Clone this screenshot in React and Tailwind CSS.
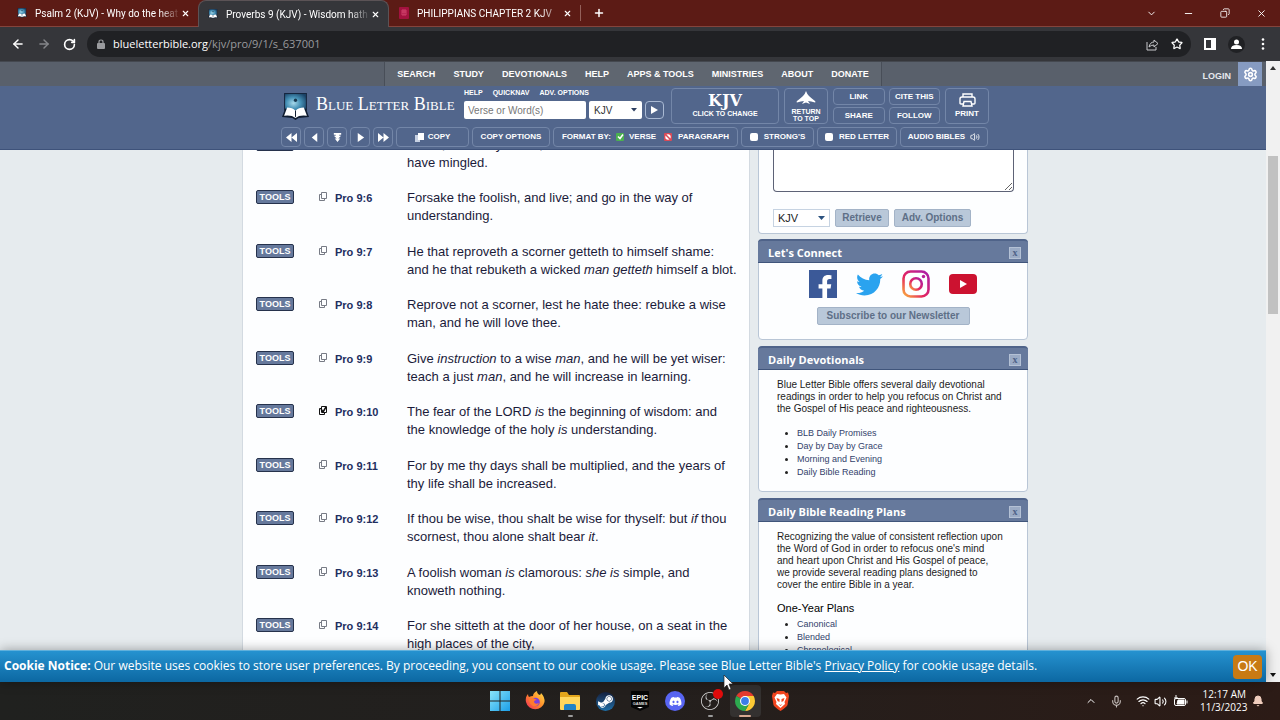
import React from "react";
import { FaTwitter, FaFacebookF, FaDiscord, FaSteamSymbol } from "react-icons/fa";
import { SiObsstudio } from "react-icons/si";
import {
  ArrowLeft,
  ArrowRight,
  RotateCw,
  Star,
  Settings,
  Volume2,
  Wifi,
  Mic,
  ChevronUp,
  ChevronDown,
  Minus,
  Copy,
  Plus,
  X,
  Bell,
} from "lucide-react";

const verses = [
  { id: "9:5", lines: [["Come, eat of my bread, and drink of the wine which I"], ["have mingled."]] },
  { id: "9:6", lines: [["Forsake the foolish, and live; and go in the way of"], ["understanding."]] },
  {
    id: "9:7",
    lines: [
      ["He that reproveth a scorner getteth to himself shame:"],
      ["and he that rebuketh a wicked ", <i key="i">man getteth</i>, " himself a blot."],
    ],
  },
  { id: "9:8", lines: [["Reprove not a scorner, lest he hate thee: rebuke a wise"], ["man, and he will love thee."]] },
  {
    id: "9:9",
    lines: [
      ["Give ", <i key="a">instruction</i>, " to a wise ", <i key="b">man</i>, ", and he will be yet wiser:"],
      ["teach a just ", <i key="i">man</i>, ", and he will increase in learning."],
    ],
  },
  {
    id: "9:10",
    checked: true,
    lines: [
      ["The fear of the LORD ", <i key="i">is</i>, " the beginning of wisdom: and"],
      ["the knowledge of the holy ", <i key="i">is</i>, " understanding."],
    ],
  },
  { id: "9:11", lines: [["For by me thy days shall be multiplied, and the years of"], ["thy life shall be increased."]] },
  {
    id: "9:12",
    lines: [
      ["If thou be wise, thou shalt be wise for thyself: but ", <i key="i">if</i>, " thou"],
      ["scornest, thou alone shalt bear ", <i key="i">it</i>, "."],
    ],
  },
  {
    id: "9:13",
    lines: [
      ["A foolish woman ", <i key="a">is</i>, " clamorous: ", <i key="b">she is</i>, " simple, and"],
      ["knoweth nothing."],
    ],
  },
  { id: "9:14", lines: [["For she sitteth at the door of her house, on a seat in the"], ["high places of the city,"]] },
];

const navItems = ["SEARCH", "STUDY", "DEVOTIONALS", "HELP", "APPS & TOOLS", "MINISTRIES", "ABOUT", "DONATE"];

const BlbIcon = ({ className }) => (
  <svg className={className} viewBox="0 0 26 26" aria-hidden="true">
    <defs>
      <radialGradient id="sky" cx=".4" cy=".55" r=".7">
        <stop offset="0" stopColor="#a5d8ea" />
        <stop offset=".5" stopColor="#4590b5" />
        <stop offset="1" stopColor="#1b4468" />
      </radialGradient>
    </defs>
    <rect x="2" y="0" width="22" height="17" fill="#15263f" />
    <rect x="3" y="1" width="20" height="16" fill="url(#sky)" />
    <circle cx="13" cy="7" r="1.6" fill="#17384f" />
    <path d="M0 23 3 15l10 2 10-2 3 8-10 1-3 2-3-2z" fill="#0f1c30" />
    <path d="M2 22 5 14q5 0 8 3 3-3 8-3l3 8q-7-1-11 2-4-3-11-2z" fill="#fff" />
    <path d="M13 17v6" stroke="#0f1c30" strokeWidth="1" />
  </svg>
);

const Tab = ({ active, title, icon, className }) => (
  <div
    className={`flex items-center h-full pr-2 ${
      active ? "bg-[#35363a] rounded-t-lg border-t border-x border-[#5b5356]" : "border-b border-[#84443c]"
    } ${className}`}
  >
    {icon}
    <span className="flex-1 ml-2 whitespace-nowrap text-[10px] text-white [mask-image:linear-gradient(to_right,black_85%,transparent)]">
      {title}
    </span>
    <button aria-label="Close tab" className="text-white">
      <X size={9} strokeWidth={3} />
    </button>
  </div>
);

const HeaderButton = ({ className, children }) => (
  <button
    className={`flex items-center justify-center rounded-sm border border-[#7386a8] font-bold text-white text-[8px] whitespace-nowrap ${className}`}
  >
    {children}
  </button>
);

const Panel = ({ title, className, children }) => (
  <section className={`rounded-sm border border-[#b9c6d6] bg-[#fdfeff] ${className}`}>
    <header className="-mx-px -mt-px h-6 rounded-t-sm border-t-2 border-b border-t-[#4f6389] border-b-[#40557b] bg-[#66799c] flex items-center justify-between pl-[10px] pr-[7px] pt-[2px]">
      <h2 className="font-['Open_Sans',sans-serif] font-bold text-[11px] leading-4 text-white">{title}</h2>
      <button
        aria-label={`Close ${title}`}
        className="size-3 flex items-center justify-center bg-[#9babc5] border border-[#b4c1d5] font-['Liberation_Serif',serif] font-bold text-[10px] leading-none text-[#4f6389]"
      >
        x
      </button>
    </header>
    {children}
  </section>
);

const LinkList = ({ items, className }) => (
  <ul className={`list-disc pl-5 text-[9px] leading-[13px] marker:text-[#222] ${className}`}>
    {items.map((item) => (
      <li key={item}>
        <a href="#" className="text-[#33426b]">
          {item}
        </a>
      </li>
    ))}
  </ul>
);

const BrowserChrome = () => (
  <div className="shrink-0">
    <div className="flex h-[27px] bg-[#5c1b15] font-['Roboto',sans-serif]">
      <Tab className="w-[198px] pl-[17px]" title="Psalm 2 (KJV) - Why do the heat" icon={<BlbIcon className="size-[10px] shrink-0" />} />
      <Tab active className="w-[191px] pl-[9px]" title="Proverbs 9 (KJV) - Wisdom hath" icon={<BlbIcon className="size-[10px] shrink-0" />} />
      <Tab
        className="w-[191px] pl-[10px]"
        title="PHILIPPIANS CHAPTER 2 KJV"
        icon={
          <svg className="w-[10px] h-3 shrink-0" viewBox="0 0 10 12">
            <rect width="10" height="12" rx="1" fill="#a3123f" />
            <path d="M3 3h4v5H3zM5 3v5M3 5h4" stroke="#e0537b" strokeWidth=".7" fill="none" />
          </svg>
        }
      />
      <div className="flex-1 flex items-center border-b border-[#84443c] text-white">
        <div className="h-4 w-px bg-[#94605a]" />
        <button aria-label="New tab" className="ml-3">
          <Plus size={12} strokeWidth={3} />
        </button>
        <div className="flex-1" />
        <div className="flex items-center gap-[26px] pr-[13px]">
          <button aria-label="Search tabs"><ChevronDown size={11} /></button>
          <button aria-label="Minimize"><Minus size={11} /></button>
          <button aria-label="Restore"><Copy size={10} className="-scale-x-100" /></button>
          <button aria-label="Close"><X size={11} /></button>
        </div>
      </div>
    </div>
    <div className="flex items-center h-[34px] bg-[#35363a] pl-[11px] pr-[15px] text-white font-['Open_Sans',sans-serif]">
      <button aria-label="Back"><ArrowLeft size={14} strokeWidth={2.5} /></button>
      <button aria-label="Forward" className="ml-3 text-[#85868a]"><ArrowRight size={14} strokeWidth={2.5} /></button>
      <button aria-label="Reload" className="ml-3"><RotateCw size={13} strokeWidth={3} /></button>
      <div className="ml-[11px] flex-1 flex items-center h-[26px] rounded-full bg-[#202124] pl-[10px] pr-2">
        <svg width="8" height="10" viewBox="0 0 8 10">
          <rect y="4" width="8" height="6" rx="1" fill="#9a9b9e" />
          <path d="M2 4V3q0-2 2-2t2 2v1" fill="none" stroke="#9a9b9e" strokeWidth="1.200" />
        </svg>
        <div className="flex-1 ml-2 text-[11px] text-[#9a9b9e]">
          <span className="text-white">blueletterbible.org</span>/kjv/pro/9/1/s_637001
        </div>
        <button aria-label="Share page" className="mr-3 text-[#c8c9cc]">
          <svg width="13" height="13" viewBox="0 0 13 13" fill="none" stroke="currentColor">
            <path d="M1 4v8h9V9" />
            <path d="M3 9q1-5 5-5V2l4 3.500-4 3.500V7Q5 7 3 9z" />
          </svg>
        </button>
        <button aria-label="Bookmark"><Star size={12} strokeWidth={2.5} /></button>
      </div>
      <button aria-label="Side panel" className="ml-[13px]">
        <svg width="12" height="12" viewBox="0 0 12 12">
          <rect width="12" height="12" fill="#fff" />
          <rect x="2" y="2" width="5" height="8" fill="#35363a" />
        </svg>
      </button>
      <button aria-label="Profile" className="ml-3 size-[17px] rounded-full bg-[#202124] flex items-center justify-center">
        <svg width="11" height="11" viewBox="0 0 11 11" fill="#fff">
          <circle cx="5.500" cy="3" r="2.500" />
          <path d="M0 10q0-4 5.500-4T11 10z" />
        </svg>
      </button>
      <button aria-label="Menu" className="ml-4">
        <svg width="4" height="12" viewBox="0 0 4 12" fill="#fff">
          <circle cx="2" cy="1.500" r="1.300" />
          <circle cx="2" cy="6" r="1.300" />
          <circle cx="2" cy="10.500" r="1.300" />
        </svg>
      </button>
    </div>
  </div>
);

const stepIcons = [
  { label: "Previous book", d: "M6 1v10L0 6zM12 1v10L6 6z" },
  { label: "Previous chapter", d: "M9 1v10L3 6z" },
  { label: "Jump down", d: "M2 1h8v2H8v1h2L6 8 2 4h2V3H2zM3 7h6l-3 4z" },
  { label: "Next chapter", d: "M3 1v10l7-5z" },
  { label: "Next book", d: "M0 1v10l6-5zM6 1v10l6-5z" },
];

const SiteHeader = () => (
  <div className="shrink-0">
    <div className="flex h-[25px] border-t border-[#44484f] bg-[#59606b] text-white">
      <div className="flex-1 pl-1" />
      <nav className="flex items-center gap-[18px] border-x border-[#484e58] bg-[#5f6670] px-3 pt-px text-[9px] font-bold">
        {navItems.map((item) => (
          <a key={item} href="#">
            {item}
          </a>
        ))}
      </nav>
      <div className="flex-1 flex justify-end items-center pr-1">
        <a href="#" className="mr-[7px] pt-[6px] text-[9px] font-bold text-[#e6e9ee]">
          LOGIN
        </a>
        <button aria-label="Settings" className="w-6 h-full bg-[#869bc1] flex items-center justify-center">
          <Settings size={15} strokeWidth={2.5} />
        </button>
      </div>
    </div>

    <div className="h-16 bg-[#52668c] border-b border-[#3e527a] pt-[2px] pl-1 text-white">
      <div className="mx-auto w-[708px]">
        <div className="flex h-9">
          <a href="#" className="flex items-center w-[183px] gap-[6px]">
            <BlbIcon className="w-[29px] h-[27px]" />
            <span className="font-['Liberation_Serif',serif] text-[18px] leading-6 pb-1 [font-variant:small-caps] whitespace-nowrap">
              Blue Letter Bible
            </span>
          </a>
          <form className="w-[207px]" onSubmit={(e) => e.preventDefault()}>
            <div className="flex gap-[10px] h-[10px] text-[7px] leading-[10px] font-bold">
              <a href="#">HELP</a>
              <a href="#">QUICKNAV</a>
              <a href="#">ADV. OPTIONS</a>
            </div>
            <div className="flex gap-[3px] mt-[3px]">
              <input
                aria-label="Verse or Word(s)"
                placeholder="Verse or Word(s)"
                className="w-[122px] h-[18px] rounded-xs bg-white px-1 text-[10px] text-[#333] placeholder:text-[#777]"
              />
              <div className="grid">
                <select aria-label="Translation" className="[grid-area:1/1] w-[53px] h-[18px] appearance-none rounded-xs bg-white px-[5px] text-[10px] text-[#333]">
                  <option>KJV</option>
                </select>
                <svg className="[grid-area:1/1] self-center justify-self-end mr-[5px] pointer-events-none" width="6" height="4" viewBox="0 0 6 4">
                  <path d="M0 0h6L3 3.500z" fill="#2c3e60" />
                </svg>
              </div>
              <button aria-label="Go" className="w-[19px] h-[18px] rounded-sm border border-[#a9b9d3] flex items-center justify-center">
                <svg width="7" height="8" viewBox="0 0 7 8"><path d="M0 0v8l7-4z" fill="#fff" /></svg>
              </button>
            </div>
          </form>
          <div className="flex-1 flex gap-[5px]">
            <HeaderButton className="flex-col w-[108px]">
              <span className="font-['DejaVu_Serif',serif] text-[16px] leading-4">KJV</span>
              <span className="text-[7px] leading-[10px]">CLICK TO CHANGE</span>
            </HeaderButton>
            <HeaderButton className="flex-col w-11">
              <svg width="20" height="14" viewBox="0 0 20 14">
                <path d="M10 0q1 3 3 5t6 5q1 1 0 1.500-4-1.500-7-1.500l2 3-4-1.500L6 13l2-3q-3 0-7 1.500Q0 11 1 10q4-3 6-5t3-5z" fill="#fff" />
              </svg>
              <span className="mt-[3px] text-[7px] leading-[7px]">
                RETURN
                <br />
                TO TOP
              </span>
            </HeaderButton>
            <div className="flex-1 grid grid-cols-2 gap-x-1 gap-y-[2px]">
              <HeaderButton>LINK</HeaderButton>
              <HeaderButton>CITE THIS</HeaderButton>
              <HeaderButton>SHARE</HeaderButton>
              <HeaderButton>FOLLOW</HeaderButton>
            </div>
            <HeaderButton className="flex-col w-11">
              <svg width="17" height="14" viewBox="0 0 17 14" fill="none" stroke="#fff" strokeWidth="1.400">
                <path d="M4 4V1h9v3M4 11H2q-1 0-1-1V6q0-2 2-2h11q2 0 2 2v4q0 1-1 1h-2" />
                <path d="M5 8.500h7l1 4.500H4z" />
              </svg>
              <span className="mt-[2px] leading-[10px]">PRINT</span>
            </HeaderButton>
          </div>
        </div>

        <div className="flex gap-[3px] mt-[3px] h-5">
          {stepIcons.map((step) => (
            <HeaderButton key={step.label} className="w-5">
              <svg width="11" height="11" viewBox="0 0 12 12" role="img" aria-label={step.label}>
                <path d={step.d} fill="#fff" />
              </svg>
            </HeaderButton>
          ))}
          <HeaderButton className="w-[73px] gap-1">
            <svg width="9" height="9" viewBox="0 0 9 9">
              <path d="M0 2h5v7H0z" fill="#c7d1e2" />
              <path d="M3 0h6v7H3z" fill="#fff" />
            </svg>
            COPY
          </HeaderButton>
          <HeaderButton className="w-[78px]">COPY OPTIONS</HeaderButton>
          <fieldset className="flex items-center justify-center w-[185px] rounded-sm border border-[#7386a8] font-bold text-[8px] whitespace-nowrap">
            FORMAT BY:
            <label className="relative flex items-center gap-[5px] ml-[5px]">
              <input type="radio" name="format" defaultChecked className="sr-only" />
              <svg width="8" height="8" viewBox="0 0 8 8">
                <rect width="8" height="8" rx="1" fill="#4bb04f" />
                <path d="M2 3.500l2 2 3-4" stroke="#fff" strokeWidth="1.500" fill="none" />
              </svg>
              VERSE
            </label>
            <label className="relative flex items-center gap-[6px] ml-2">
              <input type="radio" name="format" className="sr-only" />
              <svg width="8" height="8" viewBox="0 0 8 8">
                <rect width="8" height="8" rx="1" fill="#d94a57" />
                <circle cx="4" cy="4" r="2.700" fill="#fff" />
                <path d="M1 1l6 6" stroke="#d94a57" strokeWidth="1.500" />
              </svg>
              PARAGRAPH
            </label>
          </fieldset>
          <label className="flex items-center justify-center gap-[6px] w-[73px] rounded-sm border border-[#7386a8] font-bold text-[8px]">
            <input type="checkbox" className="appearance-none size-2 rounded-xs bg-white" />
            STRONG'S
          </label>
          <label className="flex items-center justify-center gap-[6px] w-20 rounded-sm border border-[#7386a8] font-bold text-[8px] whitespace-nowrap">
            <input type="checkbox" className="appearance-none size-2 rounded-xs bg-white" />
            RED LETTER
          </label>
          <HeaderButton className="w-[88px] gap-[5px]">
            AUDIO BIBLES
            <Volume2 size={10} />
          </HeaderButton>
        </div>
      </div>
    </div>
  </div>
);

const VerseRow = ({ verse }) => (
  <li className="flex odd:pb-[17px] even:pb-[18px]">
    <div className="w-[63px] pt-px">
      <button className="block w-[38px] h-[14px] rounded-xs border border-[#26324c] bg-[#66799c] text-[9px] leading-[12px] font-bold text-white">
        TOOLS
      </button>
    </div>
    <label className="relative w-4 pt-[3px]">
      <input type="checkbox" defaultChecked={verse.checked} aria-label={`Select Pro ${verse.id}`} className="sr-only" />
      <svg width="8" height="9" viewBox="0 0 8 9" fill="none" stroke={verse.checked ? "#111" : "#777b85"}>
        <path d="M2.500.5h5v6h-5z" />
        <path d="M2.500 2.500h-2v6h5v-2" />
        {verse.checked && <path d="M2 3l2 3 3-5" strokeWidth="1.500" />}
      </svg>
    </label>
    <a href="#" className="w-[72px] text-[11px] leading-[18px] font-bold text-[#1f2f5f]">
      Pro {verse.id}
    </a>
    <p className="text-[13px] leading-[18px] text-[#1b1b3a] whitespace-nowrap">
      {verse.lines[0]}
      <br />
      {verse.lines[1]}
    </p>
  </li>
);

const panelButton = "h-[18px] rounded-xs border border-[#a3b3c7] bg-[#b9c8d9] font-bold text-[10px] leading-none text-[#5e6f87]";

const Sidebar = () => (
  <aside className="w-[270px] shrink-0">
    <section className="h-[84px] rounded-b-sm border-x border-b border-[#b9c6d6] bg-[#fdfeff] pl-[14px] pr-[13px]">
      <textarea
        aria-label="Verse list"
        className="block w-full h-[42px] rounded-b-sm border border-t-0 border-[#5d6276] bg-white resize"
      />
      <div className="flex gap-[5px] mt-[17px]">
        <div className="grid">
          <select aria-label="Bible version" className="[grid-area:1/1] w-[57px] h-[18px] appearance-none border border-[#c6d3e2] bg-white px-1 text-[11px] leading-none text-[#222]">
            <option>KJV</option>
          </select>
          <svg className="[grid-area:1/1] self-center justify-self-end mr-[5px] pointer-events-none" width="7" height="4" viewBox="0 0 7 4">
            <path d="M0 0h7L3.500 4z" fill="#2b527f" />
          </svg>
        </div>
        <button className={`${panelButton} w-[54px]`}>Retrieve</button>
        <button className={`${panelButton} w-[77px]`}>Adv. Options</button>
      </div>
    </section>

    <Panel title="Let's Connect" className="h-[101px] mt-[5px]">
      <div className="flex justify-center items-center gap-[19px] h-7 mt-[7px]">
        <a href="#" aria-label="Facebook" className="size-7 bg-[#3b5998] text-white flex items-end justify-end overflow-hidden">
          <FaFacebookF size={24} className="-mb-px" />
        </a>
        <a href="#" aria-label="Twitter" className="text-[#2aa3ef]">
          <FaTwitter size={27} />
        </a>
        <a href="#" aria-label="Instagram">
          <svg width="28" height="28" viewBox="0 0 28 28" fill="none">
            <defs>
              <linearGradient id="insta" x1="0" y1="1" x2="1" y2="0">
                <stop offset="0" stopColor="#fbb13c" />
                <stop offset=".4" stopColor="#e4245f" />
                <stop offset="1" stopColor="#a81cab" />
              </linearGradient>
            </defs>
            <rect x="1.500" y="1.500" width="25" height="25" rx="7" stroke="url(#insta)" strokeWidth="2.600" />
            <circle cx="14" cy="14" r="5.800" stroke="url(#insta)" strokeWidth="2.600" />
            <circle cx="21.500" cy="6.500" r="1.700" fill="#b81e9a" />
          </svg>
        </a>
        <a href="#" aria-label="YouTube">
          <svg width="28" height="20" viewBox="0 0 28 20">
            <rect width="28" height="20" rx="4" fill="#cc1230" />
            <path d="M11 6v8l7-4z" fill="#fff" />
          </svg>
        </a>
      </div>
      <div className="flex justify-center mt-[9px]">
        <button className={`${panelButton} w-[153px]`}>Subscribe to our Newsletter</button>
      </div>
    </Panel>

    <Panel title="Daily Devotionals" className="h-[146px] mt-[6px]">
      <p className="px-[18px] pt-[9px] text-[10px] leading-3 text-[#1c1c1c] whitespace-nowrap">
        Blue Letter Bible offers several daily devotional
        <br />
        readings in order to help you refocus on Christ and
        <br />
        the Gospel of His peace and righteousness.
      </p>
      <LinkList className="mt-3 ml-[18px]" items={["BLB Daily Promises", "Day by Day by Grace", "Morning and Evening", "Daily Bible Reading"]} />
    </Panel>

    <Panel title="Daily Bible Reading Plans" className="mt-[6px]">
      <p className="px-[18px] pt-[9px] text-[10px] leading-3 text-[#1c1c1c] whitespace-nowrap">
        Recognizing the value of consistent reflection upon
        <br />
        the Word of God in order to refocus one's mind
        <br />
        and heart upon Christ and His Gospel of peace,
        <br />
        we provide several reading plans designed to
        <br />
        cover the entire Bible in a year.
      </p>
      <h3 className="mt-[11px] px-[18px] text-[11px] leading-3 text-black">One-Year Plans</h3>
      <LinkList className="mt-1 ml-[18px]" items={["Canonical", "Blended", "Chronological"]} />
    </Panel>
  </aside>
);

const CookieBar = () => (
  <div className="relative shrink-0 flex items-center justify-between h-8 px-1 bg-linear-to-b from-[#2592d0] to-[#0c68a2] border-t border-[#5fb0dc] shadow-[0_0_12px_rgba(0,0,0,0.35)] text-white">
    <p className="font-['Open_Sans',sans-serif] text-[12px] leading-4 pb-[2px] whitespace-nowrap">
      <b>Cookie Notice:</b> Our website uses cookies to store user preferences. By proceeding, you consent to our cookie
      usage. Please see Blue Letter Bible's{" "}
      <a href="#" className="underline">
        Privacy Policy
      </a>{" "}
      for cookie usage details.
    </p>
    <button className="w-[29px] h-6 rounded-sm bg-[#c87a14] text-[14px]">OK</button>
  </div>
);

const Scrollbar = () => (
  <div className="w-[14px] shrink-0 flex flex-col items-center bg-[#f1f1f1] py-[5px]">
    <svg width="6" height="4" viewBox="0 0 6 4"><path d="M0 4h6L3 0z" fill="#333" /></svg>
    <div className="mt-[86px] w-[10px] h-[158px] bg-[#c1c1c1]" />
    <div className="flex-1" />
    <svg width="6" height="4" viewBox="0 0 6 4"><path d="M0 0h6L3 4z" fill="#111" /></svg>
  </div>
);

const ChromeLogo = () => (
  <svg width="20" height="20" viewBox="0 0 20 20">
    <path d="M10 10 1.340 5A10 10 0 0 1 18.660 5z" fill="#e33b2e" />
    <path d="M10 10 1.340 5A10 10 0 0 0 10 20z" fill="#2da94f" />
    <path d="M10 5h8.660A10 10 0 0 1 10 20l4.300-7.500z" fill="#fcc934" />
    <path d="M5.700 12.500 10 20l4.300-7.500z" fill="#2da94f" />
    <circle cx="10" cy="10" r="5" fill="#fff" />
    <circle cx="10" cy="10" r="3.900" fill="#3a7de8" />
  </svg>
);

const apps = [
  {
    name: "Start",
    icon: (
      <svg width="20" height="20" viewBox="0 0 20 20">
        <defs>
          <linearGradient id="win" x1="0" y1="0" x2="1" y2="1">
            <stop offset="0" stopColor="#8be6fb" />
            <stop offset="1" stopColor="#1a9ee8" />
          </linearGradient>
        </defs>
        <path d="M0 0h9.500v9.500H0zM10.500 0H20v9.500h-9.500zM0 10.500h9.500V20H0zM10.500 10.500H20V20h-9.500z" fill="url(#win)" />
      </svg>
    ),
  },
  {
    name: "Firefox",
    icon: (
      <svg width="20" height="20" viewBox="0 0 20 20">
        <defs>
          <linearGradient id="fox" x1="1" y1="0" x2="0" y2="1">
            <stop offset="0" stopColor="#ffe34a" />
            <stop offset=".5" stopColor="#ff8a2a" />
            <stop offset="1" stopColor="#f0265f" />
          </linearGradient>
        </defs>
        <path d="M3 3q0 2 1 3 2-1 4-1 0-3 4-5 0 3 3 4 1-1 1-2 4 4 3.500 9A9.500 9.500 0 0 1 1 11Q0 6 3 3z" fill="url(#fox)" />
        <circle cx="10.500" cy="11" r="4.300" fill="#7a3fe0" />
        <path d="M4 8q3-2 6 0l2 1q-3 0-3 2 1 3 5 1-2 4-6 3-4-2-4-7z" fill="#ff7a2f" />
      </svg>
    ),
  },
  {
    name: "File Explorer",
    mark: "bg-[#9b9b9b] w-[5px]",
    icon: (
      <svg width="20" height="18" viewBox="0 0 20 18">
        <path d="M0 1q0-1 1-1h6l2 3h10q1 0 1 1v13H0z" fill="#e3a61c" />
        <path d="M0 5h20v12q0 1-1 1H1q-1 0-1-1z" fill="#ffd75e" />
        <path d="M4 18v-4q0-2 2-2h8q2 0 2 2v4z" fill="#1f84c9" />
      </svg>
    ),
  },
  {
    name: "Steam",
    icon: (
      <span className="size-[19px] rounded-full bg-linear-to-b from-[#14213f] to-[#1d6fa8] flex items-center justify-center">
        <FaSteamSymbol size={17} color="#fff" />
      </span>
    ),
  },
  {
    name: "Epic Games",
    icon: (
      <svg width="18" height="20" viewBox="0 0 18 20">
        <path d="M1 0h16q1 0 1 1v15l-9 4-9-4V1q0-1 1-1z" fill="#050505" />
        <text x="9" y="9" textAnchor="middle" fontSize="7" fontWeight="bold" fill="#fff" fontFamily="Liberation Sans">EPIC</text>
        <text x="9" y="14" textAnchor="middle" fontSize="4" fontWeight="bold" fill="#ddd" fontFamily="Liberation Sans">GAMES</text>
        <path d="M6 16h6l-3 1.500z" fill="#fff" />
      </svg>
    ),
  },
  {
    name: "Discord",
    icon: (
      <span className="size-5 rounded-full bg-[#5865f2] flex items-center justify-center">
        <FaDiscord size={13} color="#fff" />
      </span>
    ),
  },
  {
    name: "OBS Studio",
    mark: "bg-[#9b9b9b] w-[5px]",
    icon: (
      <span className="relative">
        <SiObsstudio size={18} color="#d8d8d8" />
        <span className="absolute -top-[3px] -right-1 size-[10px] rounded-full bg-[#e00b0b]" />
      </span>
    ),
  },
  { name: "Chrome", active: true, mark: "bg-[#d9a892] w-3", icon: <ChromeLogo /> },
  {
    name: "Brave",
    icon: (
      <svg width="17" height="20" viewBox="0 0 17 20">
        <path d="M5 0h7l2 2 2-.500L17 5l-1.500 9q-1 2-7 6-6-4-7-6L0 5l1-3.500L3 2z" fill="#f1451f" />
        <path d="M8.500 3.500 12 3l2.500 3.500-2 4.500.5 2-4.500 4-4.500-4 .5-2L2.500 6.500 5 3z" fill="#fff" />
        <path d="M4.500 7l3 1v3l-2-1zM12.500 7l-3 1v3l2-1zM6.500 13l2 1 2-1-2 2z" fill="#f1451f" />
      </svg>
    ),
  },
];

const Taskbar = () => (
  <div className="shrink-0 flex h-[38px] bg-linear-to-r from-[#20211f] via-[#231f1d] to-[#2c1b16] font-['Open_Sans',sans-serif] text-white">
    <div className="flex-1 pl-4" />
    <div className="flex gap-1">
      {apps.map((app) => (
        <button
          key={app.name}
          aria-label={app.name}
          className={`flex flex-col items-center w-[31px] my-[3px] rounded-sm ${app.active ? "bg-[#343130]" : ""}`}
        >
          <span className="flex-1 flex items-center pt-[2px]">{app.icon}</span>
          <span className={`h-[2px] rounded-full ${app.mark || ""}`} />
        </button>
      ))}
    </div>
    <div className="flex-1 flex items-center justify-end pr-4">
      <ChevronUp size={12} />
      <Mic size={13} className="ml-[13px] text-[#c9c2bf]" />
      <Wifi size={14} className="ml-[13px]" />
      <Volume2 size={13} className="ml-1" />
      <svg className="ml-[6px]" width="15" height="13" viewBox="0 0 15 13" fill="none" stroke="#fff">
        <rect x="1.500" y="3.500" width="11" height="7" rx="1.500" />
        <path d="M5 5h6v4H4z" fill="#fff" />
        <path d="M14 5.500v3M3 0v3M1 3h4" />
      </svg>
      <div className="ml-3 w-[46px] text-right text-[10px] leading-[13px] whitespace-nowrap">
        12:17 AM
        <br />
        11/3/2023
      </div>
      <Bell size={12} fill="#f0cdbd" className="ml-[6px] text-[#f0cdbd]" />
    </div>
  </div>
);

export default function App() {
  return (
    <div className="relative flex flex-col h-screen overflow-hidden font-['Liberation_Sans',Arial,sans-serif]">
      <BrowserChrome />
      <div className="flex-1 min-h-0 flex">
        <div className="flex-1 min-w-0 flex flex-col">
          <SiteHeader />
          <div className="flex-1 min-h-0 overflow-hidden bg-[#e6ebee] pl-1">
            <div className="mx-auto w-[786px] flex gap-2">
              <main className="flex-1 border-x border-[#d3dae1] bg-[#fdfeff] pl-[13px]">
                <ol className="-mt-[14px]">
                  {verses.map((verse) => (
                    <VerseRow key={verse.id} verse={verse} />
                  ))}
                </ol>
              </main>
              <Sidebar />
            </div>
          </div>
          <CookieBar />
        </div>
        <Scrollbar />
      </div>
      <Taskbar />
      {/* Mouse pointer */}
      <svg className="absolute left-[723px] top-[674px] pointer-events-none" width="11" height="17" viewBox="0 0 11 17">
        <path d="M1 1v13l3-3 2 5 2-1-2-5h4z" fill="#fff" stroke="#222" strokeWidth=".7" />
      </svg>
    </div>
  );
}
